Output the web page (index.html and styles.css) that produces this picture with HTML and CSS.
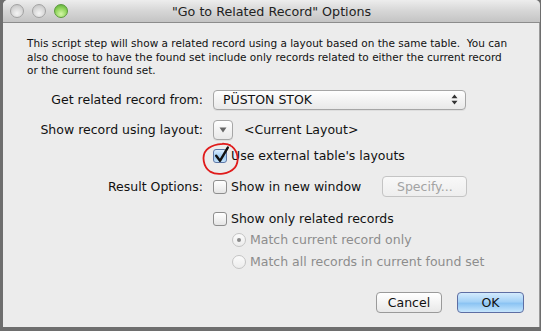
FILE: index.html
```html
<!DOCTYPE html>
<html lang="en">
<head>
  <meta charset="UTF-8" />
  <title>"Go to Related Record" Options</title>
  <link rel="stylesheet" href="styles.css">
</head>
<body>

  <div class="window">
    <!-- Title bar -->
    <div class="titlebar">
      <div class="lights">
        <span class="light"></span>
        <span class="light"></span>
        <span class="light green"></span>
      </div>
      <div class="title">"Go to Related Record" Options</div>
    </div>

    <div class="content">
      <p class="intro">
        This script step will show a related record using a layout based on the same table.&nbsp; You can
        also choose to have the found set include only records related to either the current record
        or the current found set.
      </p>

      <div class="row row-from">
        <div class="lbl">Get related record from:</div>
        <div class="popup wide">
          <span>PÜSTON STOK</span>
          <svg class="updown" width="7" height="11" viewBox="0 0 7 11">
            <path d="M3.5 0.5 L6.5 4.2 L0.5 4.2 Z M3.5 10.5 L6.5 6.8 L0.5 6.8 Z" fill="#333"/>
          </svg>
        </div>
      </div>

      <div class="row row-layout">
        <div class="lbl">Show record using layout:</div>
        <div class="popup small">
          <svg width="8" height="6" viewBox="0 0 8 6"><path d="M0.5 0.5 L7.5 0.5 L4 5.5 Z" fill="#666"/></svg>
        </div>
        <span class="current">&lt;Current Layout&gt;</span>
      </div>

      <div class="row row-ext">
        <div class="lbl"></div>
        <label class="check">
          <span class="box checked">
            <svg class="tick" width="18" height="20" viewBox="0 0 18 20">
              <path d="M3.2 10.8 L7 15.8 L14.8 2.6" fill="none" stroke="#111" stroke-width="2.4" stroke-linejoin="round" stroke-linecap="round"/>
            </svg>
            <svg class="mark" width="40" height="34" viewBox="0 0 40 34">
              <path d="M31 4.5 C25 1 13 1.2 7 6 C1 11 1.2 22 7.5 28 C14 33.2 26 33 32.5 27.5 C38 22 38 12 32.5 6 C30 3.5 27 2.5 24 2" fill="none" stroke="#e01b1b" stroke-width="1.8" stroke-linecap="round"/>
            </svg>
          </span>
          Use external table's layouts
        </label>
      </div>

      <div class="row row-result">
        <div class="lbl">Result Options:</div>
        <label class="check">
          <span class="box"></span>
          Show in new window
        </label>
        <button class="btn disabled specify">Specify...</button>
      </div>

      <div class="row row-only">
        <div class="lbl"></div>
        <label class="check">
          <span class="box"></span>
          Show only related records
        </label>
      </div>

      <div class="row row-radio1">
        <div class="lbl"></div>
        <label class="radio">
          <span class="dot on"></span>
          Match current record only
        </label>
      </div>

      <div class="row row-radio2">
        <div class="lbl"></div>
        <label class="radio">
          <span class="dot"></span>
          Match all records in current found set
        </label>
      </div>

      <div class="footer">
        <button class="btn cancel">Cancel</button>
        <button class="btn ok">OK</button>
      </div>
    </div>
  </div>

</body>
</html>
```

FILE: styles.css
```css
/* General Styles */
body {
  margin: 0;
  background: #6e6e6e;
  font-family: "DejaVu Sans", sans-serif;
  font-size: 12.5px;
  color: #111;
}
.window {
  margin-left: 3px;
  width: 537px;
  height: 327px;
  background: #ececec;
  border-radius: 5px 5px 0 0;
  overflow: hidden;
  box-shadow: inset -1px 0 0 #9a9a9a;
}

/* Title bar */
.titlebar {
  position: relative;
  height: 22px;
  background: linear-gradient(#ededed, #d6d6d6 50%, #c4c4c4);
  border-bottom: 1px solid #8c8c8c;
  display: flex;
  align-items: center;
  justify-content: center;
}
.lights {
  position: absolute;
  left: 7px;
  top: 4px;
  display: flex;
  gap: 8px;
}
.light {
  width: 12px;
  height: 12px;
  border-radius: 50%;
  border: 1px solid #a2a2a2;
  background: radial-gradient(circle at 50% 70%, #f4f4f4, #d4d4d4 60%, #bdbdbd);
}
.light.green {
  border-color: #5b9a3c;
  background: radial-gradient(circle at 50% 75%, #d5f7a8, #8fd45a 55%, #54a533);
}
.title {
  font-size: 12.7px;
  color: #222;
}

/* Content */
.content {
  padding: 0 0 0 24px;
}
.intro {
  margin: 14px 0 0;
  width: 484px;
  font-size: 10.5px;
  line-height: 13.5px;
}
.row {
  display: flex;
  align-items: center;
}
.lbl {
  width: 176px;
  margin-right: 10px;
  text-align: right;
}
.row-from { margin-top: 12px; height: 20px; }
.row-layout { margin-top: 10px; height: 20px; }
.row-ext { margin-top: 8px; height: 16px; }
.row-result { margin-top: 13px; height: 20px; }
.row-only { margin-top: 14px; height: 16px; }
.row-radio1 { margin-top: 5px; height: 16px; padding-left: 19px; }
.row-radio2 { margin-top: 6px; height: 16px; padding-left: 19px; }

/* Popups */
.popup {
  box-sizing: border-box;
  height: 20px;
  border: 1px solid #a6a6a6;
  border-radius: 4px;
  background: linear-gradient(#ffffff, #f3f3f3 50%, #e9e9e9);
  display: flex;
  align-items: center;
  box-shadow: 0 1px 0 rgba(0,0,0,0.06);
}
.popup.wide {
  width: 253px;
  padding: 0 7px 0 9px;
  justify-content: space-between;
}
.popup.small {
  width: 20px;
  justify-content: center;
}
.current {
  margin-left: 11px;
}

/* Checkboxes and radios */
.check,
.radio {
  display: flex;
  align-items: center;
  gap: 4px;
}
.box {
  position: relative;
  box-sizing: border-box;
  width: 14px;
  height: 14px;
  border: 1px solid #8e8e8e;
  border-radius: 3px;
  background: linear-gradient(#ffffff, #f0f0f0 60%, #e4e4e4);
}
.box.checked {
  border-color: #5d77a6;
  background: linear-gradient(#dbeeff, #9ccbf3 55%, #c5e3fc);
}
.tick {
  position: absolute;
  left: -1px;
  top: -5px;
}
.mark {
  position: absolute;
  left: -13px;
  top: -8px;
  transform: rotate(-8deg);
}
.radio {
  color: #8d8d8d;
}
.dot {
  box-sizing: border-box;
  width: 14px;
  height: 14px;
  border-radius: 50%;
  border: 1px solid #c4c4c4;
  background: linear-gradient(#fbfbfb, #ececec);
  display: flex;
  align-items: center;
  justify-content: center;
}
.dot.on::after {
  content: "";
  width: 4px;
  height: 4px;
  border-radius: 50%;
  background: #8a8a8a;
}

/* Buttons */
.btn {
  box-sizing: border-box;
  font-family: "DejaVu Sans", sans-serif;
  font-size: 12.5px;
  height: 21px;
  border-radius: 4px;
  border: 1px solid #9a9a9a;
  background: linear-gradient(#ffffff, #f4f4f4 50%, #e8e8e8);
  color: #111;
  padding: 0;
}
.specify {
  margin-left: 21px;
  width: 85px;
  color: #a3a3a3;
  border-color: #c4c4c4;
  background: linear-gradient(#f8f8f8, #eeeeee);
}
.footer {
  display: flex;
  justify-content: flex-end;
  gap: 15px;
  margin-top: 22px;
  padding-right: 16px;
}
.cancel {
  width: 66px;
}
.ok {
  width: 67px;
  border-color: #5e6ea3;
  background: linear-gradient(#d4ebfd, #a5d2f7 45%, #8cc4f3 55%, #c6e6fd);
}
```
